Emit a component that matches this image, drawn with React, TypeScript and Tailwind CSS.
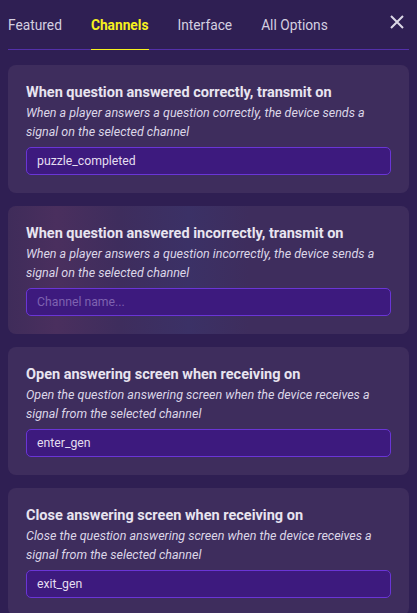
import React from "react";

const cards = [
  {
    title: "When question answered correctly, transmit on",
    desc: "When a player answers a question correctly, the device sends a signal on the selected channel",
    value: "puzzle_completed",
  },
  {
    title: "When question answered incorrectly, transmit on",
    desc: "When a player answers a question incorrectly, the device sends a signal on the selected channel",
    value: "",
  },
  {
    title: "Open answering screen when receiving on",
    desc: "Open the question answering screen when the device receives a signal from the selected channel",
    value: "enter_gen",
  },
  {
    title: "Close answering screen when receiving on",
    desc: "Close the question answering screen when the device receives a signal from the selected channel",
    value: "exit_gen",
  },
];

export default function App() {
  return (
    <div
      className="w-[417px] h-[613px] overflow-hidden bg-[#2f1f53] text-[#e6e2ee]"
      style={{ fontFamily: "Roboto, 'Noto Sans', sans-serif" }}
    >
      <div className="px-[8px] pt-[14px]">
        <div className="flex items-start justify-between">
          <div className="flex gap-[29px] text-[13.75px] leading-[22px]">
            <div className="pb-[13px] text-[#d4cfe0]">Featured</div>
            <div className="relative pb-[13px] font-bold text-[#f7f21e] border-b border-[#f7f21e] -mb-px">Channels</div>
            <div className="pb-[13px] text-[#d4cfe0]">Interface</div>
            <div className="pb-[13px] text-[#d4cfe0]">All Options</div>
          </div>
          <svg width="14" height="14" viewBox="0 0 14 14" className="mt-[1px] mr-[5px]">
            <path d="M1 1 L13 13 M13 1 L1 13" stroke="#dcd8e6" strokeWidth="2" />
          </svg>
        </div>
        <div className="h-px bg-[#5330aa]" />
      </div>
      <div className="flex flex-col gap-[13px] px-[8px] pt-[15px]">
        {cards.map((c, i) => (
          <div
            key={i}
            className={
              "rounded-[8px] px-[18px] pt-[18px] pb-[18px] " +
              (i === 1
                ? "bg-[linear-gradient(90deg,#3f2c5a_0%,#4a2f5e_12%,#3e2d5d_28%,#3b3166_45%,#3e2d5d_60%,#3e2d5d_100%)]"
                : "bg-[#3e2d5d]")
            }
          >
            <div className="text-[14.5px] leading-[20px] font-bold text-[#e8e4f0]">{c.title}</div>
            <div className="text-[12.5px] leading-[19px] italic text-[#dcd6e8]">{c.desc}</div>
            <div className="mt-[6px] h-[28px] rounded-[5px] border border-[#6a35d6] bg-[#3d1a7e] flex items-center px-[10px] text-[12.25px]">
              {c.value ? (
                <span className="text-[#e4def0]">{c.value}</span>
              ) : (
                <span className="text-[#7e62b0]">Channel name...</span>
              )}
            </div>
          </div>
        ))}
      </div>
    </div>
  );
}
